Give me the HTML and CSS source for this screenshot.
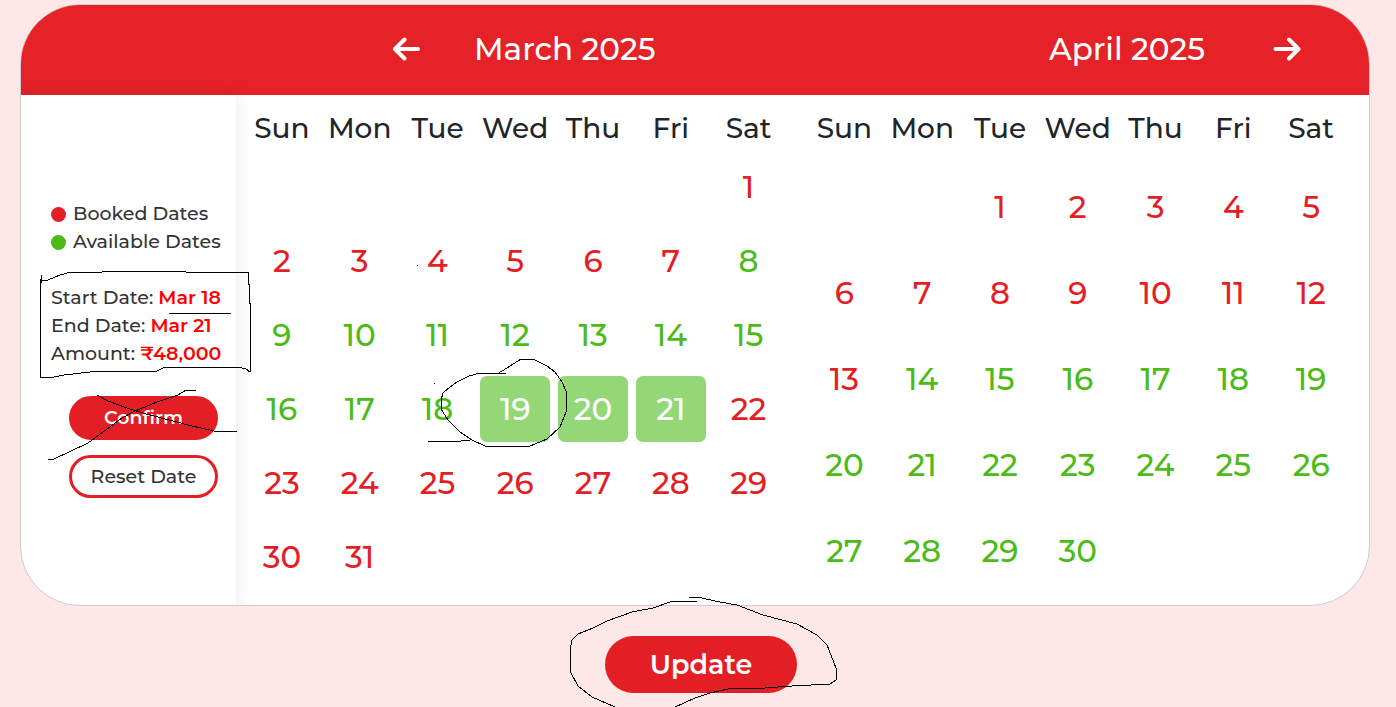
FILE: index.html
```html
<!DOCTYPE html>
<html lang="en">
<head>
<meta charset="utf-8">
<meta name="viewport" content="width=device-width, initial-scale=1">
<title>Booking calendar</title>
<link rel="stylesheet" href="styles.css">
</head>
<body>
<main class="page">
  <section class="card">
    <header class="card-header">
      <div class="month-nav">
        <button class="arrow" type="button" aria-label="Previous month">
          <svg viewBox="0 0 28 24" width="28" height="24" aria-hidden="true"><path d="M12.500 2.500 3 12l9.500 9.500M3.500 12h22.500"/></svg>
        </button>
        <h2 class="month-title">March 2025</h2>
      </div>
      <div class="month-nav month-nav-next">
        <h2 class="month-title">April 2025</h2>
        <button class="arrow" type="button" aria-label="Next month">
          <svg viewBox="0 0 28 24" width="28" height="24" aria-hidden="true"><path d="M16 2.500 25.500 12 16 21.500M25 12H2.500"/></svg>
        </button>
      </div>
    </header>
    <div class="card-body">
      <aside class="sidebar">
        <ul class="legend">
          <li><span class="dot dot-booked"></span>Booked Dates</li>
          <li><span class="dot dot-available"></span>Available Dates</li>
        </ul>
        <div class="summary">
          <p>Start Date: <span class="value">Mar 18</span></p>
          <p>End Date: <span class="value">Mar 21</span></p>
          <p>Amount: <span class="value">₹48,000</span></p>
        </div>
        <div class="actions">
          <button class="btn btn-confirm" type="button">Confirm</button>
          <button class="btn btn-reset" type="button">Reset Date</button>
        </div>
      </aside>
      <div class="months">
        <table class="month month-six" aria-label="March 2025">
          <thead><tr><th>Sun</th><th>Mon</th><th>Tue</th><th>Wed</th><th>Thu</th><th>Fri</th><th>Sat</th></tr></thead>
          <tbody>
            <tr><td></td><td></td><td></td><td></td><td></td><td></td><td><button class="day booked">1</button></td></tr>
            <tr><td><button class="day booked">2</button></td><td><button class="day booked">3</button></td><td><button class="day booked">4</button></td><td><button class="day booked">5</button></td><td><button class="day booked">6</button></td><td><button class="day booked">7</button></td><td><button class="day">8</button></td></tr>
            <tr><td><button class="day">9</button></td><td><button class="day">10</button></td><td><button class="day">11</button></td><td><button class="day">12</button></td><td><button class="day">13</button></td><td><button class="day">14</button></td><td><button class="day">15</button></td></tr>
            <tr><td><button class="day">16</button></td><td><button class="day">17</button></td><td><button class="day">18</button></td><td><button class="day selected">19</button></td><td><button class="day selected">20</button></td><td><button class="day selected">21</button></td><td><button class="day booked">22</button></td></tr>
            <tr><td><button class="day booked">23</button></td><td><button class="day booked">24</button></td><td><button class="day booked">25</button></td><td><button class="day booked">26</button></td><td><button class="day booked">27</button></td><td><button class="day booked">28</button></td><td><button class="day booked">29</button></td></tr>
            <tr><td><button class="day booked">30</button></td><td><button class="day booked">31</button></td><td></td><td></td><td></td><td></td><td></td></tr>
          </tbody>
        </table>
        <table class="month month-five" aria-label="April 2025">
          <thead><tr><th>Sun</th><th>Mon</th><th>Tue</th><th>Wed</th><th>Thu</th><th>Fri</th><th>Sat</th></tr></thead>
          <tbody>
            <tr><td></td><td></td><td><button class="day booked">1</button></td><td><button class="day booked">2</button></td><td><button class="day booked">3</button></td><td><button class="day booked">4</button></td><td><button class="day booked">5</button></td></tr>
            <tr><td><button class="day booked">6</button></td><td><button class="day booked">7</button></td><td><button class="day booked">8</button></td><td><button class="day booked">9</button></td><td><button class="day booked">10</button></td><td><button class="day booked">11</button></td><td><button class="day booked">12</button></td></tr>
            <tr><td><button class="day booked">13</button></td><td><button class="day">14</button></td><td><button class="day">15</button></td><td><button class="day">16</button></td><td><button class="day">17</button></td><td><button class="day">18</button></td><td><button class="day">19</button></td></tr>
            <tr><td><button class="day">20</button></td><td><button class="day">21</button></td><td><button class="day">22</button></td><td><button class="day">23</button></td><td><button class="day">24</button></td><td><button class="day">25</button></td><td><button class="day">26</button></td></tr>
            <tr><td><button class="day">27</button></td><td><button class="day">28</button></td><td><button class="day">29</button></td><td><button class="day">30</button></td><td></td><td></td><td></td></tr>
          </tbody>
        </table>
      </div>
    </div>
  </section>
  <footer class="page-footer">
    <button class="update" type="button">Update</button>
  </footer>
  <svg class="ink" viewBox="0 0 1396 707" width="1396" height="707" aria-hidden="true">
    <path d="M41 275V283M40 279V377H54L64 375 99 371H157L165 367H238L246 369 250 372M40 280H48L60 275 71 272H102L114 271H175L186 272H248V284H249V303H250V372M169 313H231"/>
    <path d="M97 395 108 401 127 408 146 414 173 421 192 426 214 431H237M48 459H54L88 443 103 432 122 418 135 411 157 402 178 395 186 390H196"/>
    <path d="M506 373H480L469 376 457 382 450 387 443 393 441 400V409L448 420 460 432 472 440 485 446H530L547 439 560 427 566 412 567 393 562 382 555 372 547 366 533 359H521L507 368 497 374M428 441H461L470 440M434 383h1M417 265h1"/>
    <path d="M697 601H673L653 608 632 612 607 621 593 628 578 634 572 640 570 650V671L578 686 592 697 615 707M689 597H697L720 602 737 605 763 615 797 624 817 635 827 645 836 668V680L830 684 792 686 765 688 728 689 710 693 695 698 675 707"/>
  </svg>
</main>
</body>
</html>
```
FILE: styles.css
```css
:root {
  --red: #e31e24;
  --green: #4cbb17;
}

* {
  box-sizing: border-box;
}

body {
  margin: 0;
  background: #fee8e7;
  color: #212529;
  font-family: Montserrat, Inter, "Liberation Sans", sans-serif;
}

button {
  border: 0;
  padding: 0;
  font: inherit;
  cursor: pointer;
}

h2,
p,
ul {
  margin: 0;
  padding: 0;
}

.page {
  position: relative;
  display: flex;
  flex-direction: column;
  gap: 30px;
  padding: 4px 26px 14px 20px;
  overflow: hidden;
}

.card {
  width: 100%;
  overflow: hidden;
  border: 1px solid #ccc;
  border-radius: 60px;
  background: #fff;
}

.card-header {
  display: flex;
  align-items: center;
  justify-content: space-between;
  min-height: 90px;
  padding: 0 68px 2px 371px;
  background: #e52228;
  color: #fff;
}

.month-nav {
  display: flex;
  align-items: center;
  gap: 54px;
}

.month-nav-next {
  gap: 68px;
}

.month-title {
  font-size: 31px;
  font-weight: 500;
  line-height: 40px;
}

.arrow {
  display: flex;
  background: none;
  color: inherit;
}

.arrow path {
  fill: none;
  stroke: currentColor;
  stroke-width: 4;
  stroke-linecap: round;
  stroke-linejoin: round;
}

.card-body {
  display: flex;
}

.sidebar {
  display: flex;
  flex: 0 0 215px;
  flex-direction: column;
  justify-content: center;
  gap: 28px;
  padding: 0 0 2px 30px;
  box-shadow: 0 0 16px rgba(0, 0, 0, 0.1);
  color: #333;
  font-size: 19px;
  font-weight: 500;
  line-height: 28px;
  white-space: nowrap;
}

.legend {
  list-style: none;
}

.legend li {
  display: flex;
  align-items: center;
  gap: 7px;
}

.dot {
  width: 15px;
  height: 15px;
  border-radius: 50%;
}

.dot-booked {
  background: var(--red);
}

.dot-available {
  background: var(--green);
}

.value {
  color: #f00;
  font-weight: 600;
}

.actions {
  display: flex;
  flex-direction: column;
  gap: 15px;
  padding: 0 18px;
}

.btn {
  height: 44px;
  border: 3px solid var(--red);
  border-radius: 22px;
}

.btn-confirm {
  background: var(--red);
  color: #fff;
  font-weight: 600;
}

.btn-reset {
  height: 43px;
  background: #fff;
  color: #333;
}

.months {
  display: grid;
  flex: 1;
  grid-template-columns: 1fr 1fr;
  align-items: end;
  gap: 18px;
  padding: 0 19px 11px 7px;
}

.month {
  width: 100%;
  border-collapse: collapse;
  table-layout: fixed;
}

.month th {
  padding: 0;
  font-size: 28px;
  font-weight: 500;
}

.month td {
  padding: 4px;
}

.month-six th {
  height: 44px;
}

.month-six td {
  height: 74px;
}

.month-five th {
  height: 69px;
  padding-bottom: 3px;
}

.month-five td {
  height: 86px;
}

.day {
  display: block;
  width: 100%;
  height: 66px;
  border-radius: 7px;
  background: none;
  color: var(--green);
  font-size: 31px;
  font-weight: 500;
}

.day.booked {
  color: var(--red);
}

.day.selected {
  background: #94d776;
  color: #fff;
}

.page-footer {
  display: flex;
  justify-content: center;
  padding-left: 12px;
}

.update {
  height: 57px;
  padding: 0 45px;
  border-radius: 29px;
  background: var(--red);
  color: #fff;
  font-size: 27px;
  font-weight: 600;
}

.ink {
  position: absolute;
  top: 0;
  left: 0;
  pointer-events: none;
}

.ink path {
  fill: none;
  stroke: #000;
  stroke-width: 1;
  shape-rendering: crispEdges;
}
```
